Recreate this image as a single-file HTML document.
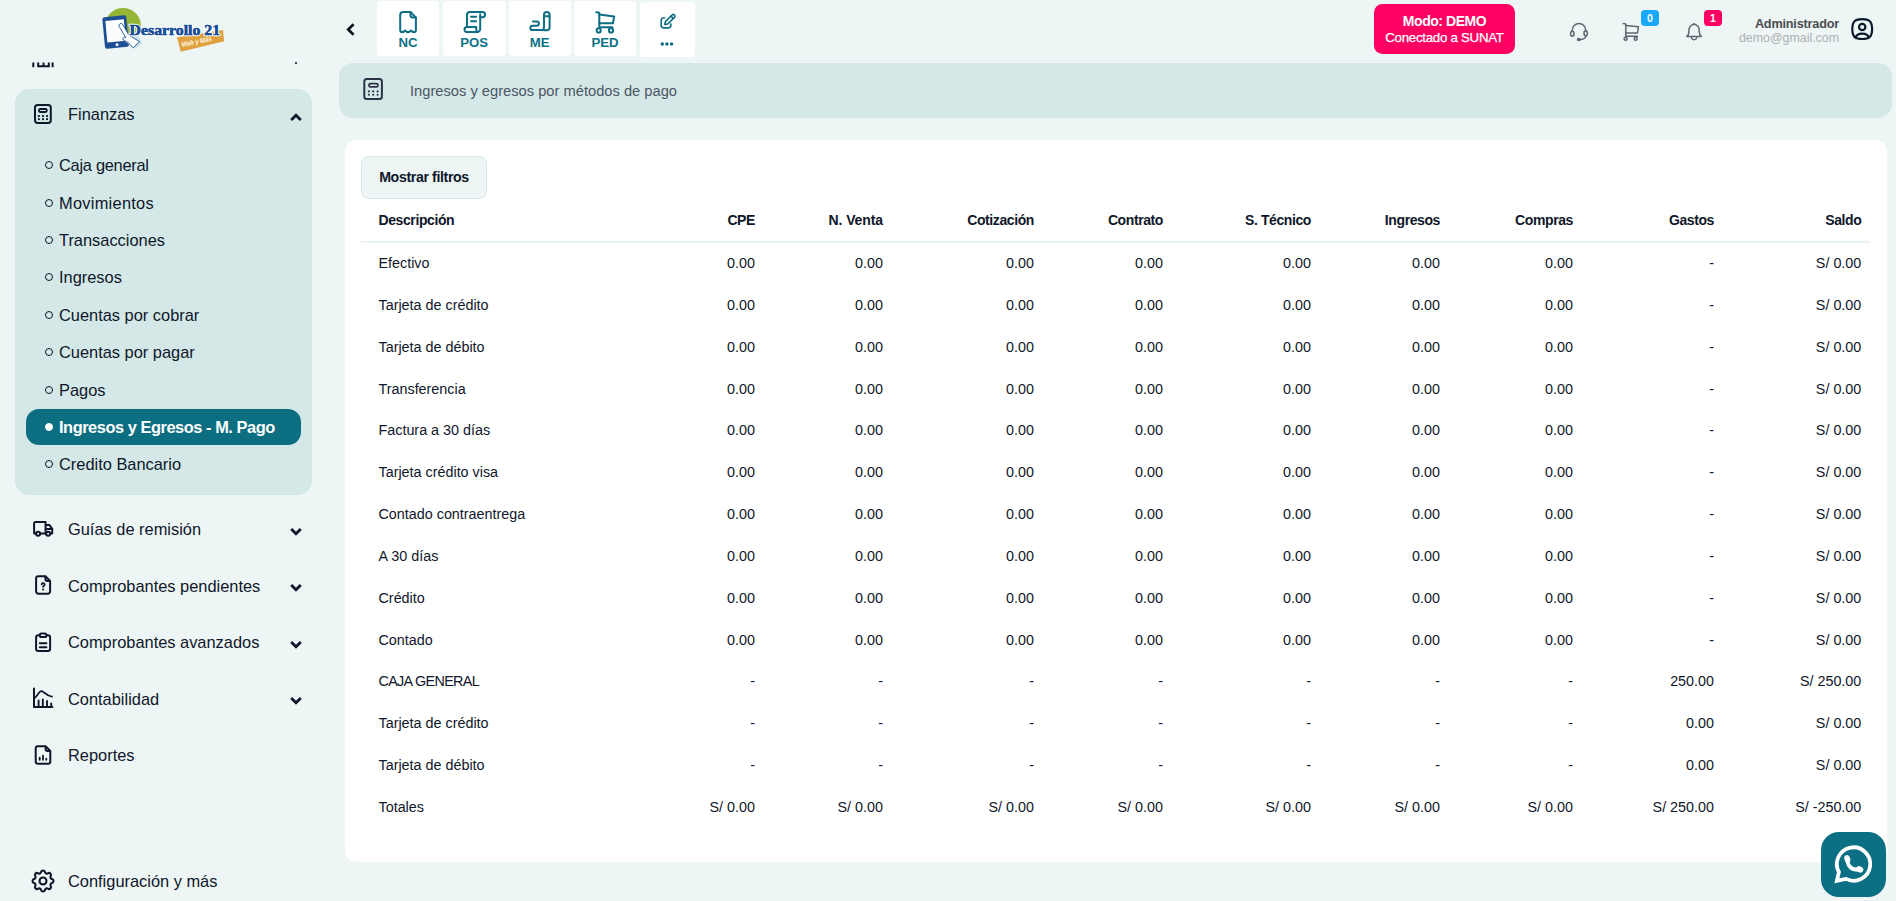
<!DOCTYPE html>
<html lang="es">
<head>
<meta charset="utf-8">
<title>Ingresos y egresos por métodos de pago</title>
<style>
*{box-sizing:border-box;margin:0;padding:0}
html,body{width:1896px;height:901px;overflow:hidden}
body{background:#edf5f5;font-family:"Liberation Sans",sans-serif;color:#0f172a;position:relative;font-size:14px}
.abs{position:absolute}
svg{display:block;overflow:visible}
/* sidebar */
#side{position:absolute;left:0;top:0;width:330px;height:901px}
#fin{position:absolute;left:15px;top:89px;width:297.3px;height:405.6px;background:#d5e8e8;border-radius:14.5px}
.nav{position:absolute;left:68px;font-size:16.4px;line-height:20px;white-space:nowrap;color:#0f172a}
.sub{position:absolute;left:59px;font-size:16.4px;line-height:20px;white-space:nowrap;color:#0f172a}
.dot{position:absolute;left:45px;width:8px;height:8px;border:1.5px solid #0f172a;border-radius:50%}
#act{position:absolute;left:26px;top:409px;width:275px;height:36px;background:#0c6e81;border-radius:13px}
.ico{position:absolute}
.chev{position:absolute;left:290px}
/* top bar */
.tb{position:absolute;top:1px;height:55px;background:#fff;border-radius:4px;color:#0e7288;font-weight:bold;font-size:13.2px;text-align:center}
.tb span{position:absolute;left:0;right:0;top:33.8px;line-height:16px}
#demo{position:absolute;left:1374px;top:4px;width:141px;height:50px;background:#fe0062;border-radius:8.5px;color:#fff;text-align:center;font-weight:bold}
/* title bar */
#title{position:absolute;left:339px;top:63px;width:1553px;height:54.5px;background:#d5e8e8;border-radius:14px}
#title .t{position:absolute;left:71px;top:18px;font-size:14.7px;line-height:20px;color:#4b5563;white-space:nowrap}
/* card */
#card{position:absolute;left:345px;top:140px;width:1542px;height:722px;background:#fff;border-radius:12px}
#btn{position:absolute;left:16px;top:16px;width:126px;height:43px;background:#edf5f5;border:1px solid #d5e8e8;border-radius:8px;font-weight:bold;font-size:14.2px;letter-spacing:-0.38px;line-height:41px;text-align:center;color:#0f172a}
table{position:absolute;left:16px;top:59px;width:1509px;border-collapse:separate;border-spacing:0;table-layout:fixed;font-size:14.35px;color:#0f172a}
th,td{text-align:right;padding:0 8.7px 0 0;white-space:nowrap;font-weight:normal;overflow:visible}
th{height:44.1px;font-weight:bold;font-size:14px;letter-spacing:-0.4px;border-bottom:2.2px solid #e9f3f3}
td{height:41.83px;padding-bottom:1.9px}
th:first-child,td:first-child{text-align:left;padding-left:17.5px}
/* whatsapp */
#wa{position:absolute;left:1821px;top:832px;width:65.3px;height:65.2px;background:#0c7085;border-radius:18px}
</style>
</head>
<body>
<div id="side">
  <div id="fin"></div>
  <div id="act"></div>
  <!-- logo -->
  <svg class="abs" style="left:95px;top:4px" width="135" height="52" viewBox="95 4 135 52">
    <path d="M105 25.9 a18 18 0 0 1 36 0 L140.2 33 H106 Z" fill="#94b634"/>
    <g transform="rotate(-5.5 115.7 31.8)"><rect x="103.6" y="16.2" width="24" height="31.6" rx="2.2" fill="#1c4f93"/><path d="M106.4 20 H125 V41.6 H106.4 Z" fill="#fbfcfd"/><circle cx="115.8" cy="44.7" r="1.5" fill="#fbfcfd"/></g>
    <path d="M128 35 L137 34.6 L142.4 43.4 L139 46 L133.5 49.2 L129.5 44.5 L124 41 Z" fill="#c9e3ee"/>
    <path d="M119.9 23.8 q1.6 -1 2.6 0.5 L129.2 35.4 L139.6 41.6 L133.2 47.8 L128.4 42.8 L123.6 40.2 Q121.6 38.4 124.2 37.2 L125.8 37.6 L119.1 26.4 q-0.7 -1.6 0.8 -2.6 Z" fill="#fdfeff" stroke="#1c4f93" stroke-width="0.9" stroke-linejoin="round"/>
    <path d="M177 37.2 L222.9 29.9 L224.2 41.2 L180.8 51.8 Z" fill="#dfa13f"/>
    <text transform="rotate(-11.5 182 47)" x="182" y="47" font-family="'Liberation Sans',sans-serif" font-weight="bold" font-style="italic" font-size="7" fill="#fff7e6" textLength="30.5" lengthAdjust="spacingAndGlyphs">Web y Más</text>
    <text x="129.6" y="35.3" font-family="'Liberation Serif',serif" font-weight="bold" font-size="14.6" fill="#1a4e96" stroke="#fcfeff" stroke-width="2.4" stroke-linejoin="round" paint-order="stroke" textLength="90.6" lengthAdjust="spacingAndGlyphs">Desarrollo 21</text>
    <text x="129.6" y="35.3" font-family="'Liberation Serif',serif" font-weight="bold" font-size="14.6" fill="#1a4e96" stroke="#1a4e96" stroke-width="0.45" stroke-linejoin="round" textLength="90.6" lengthAdjust="spacingAndGlyphs">Desarrollo 21</text>
  </svg>
  <!-- finanzas header -->
  <svg class="ico" style="left:34.2px;top:104px" width="18" height="20" viewBox="0 0 18 20" fill="none" stroke="#0f172a" stroke-width="2" stroke-linejoin="round" stroke-linecap="round"><rect x="1" y="1" width="15.8" height="17.9" rx="2.6"/><rect x="4.9" y="5" width="8" height="3" rx="1.5" stroke-width="1.8"/><g stroke="none" fill="#0f172a"><rect x="3.9" y="11.1" width="1.9" height="1.9"/><rect x="8" y="11.1" width="1.9" height="1.9"/><rect x="12.1" y="11.1" width="1.9" height="1.9"/><rect x="3.9" y="14.2" width="1.9" height="1.9"/><rect x="8" y="14.2" width="1.9" height="1.9"/><rect x="12.1" y="14.2" width="1.9" height="1.9"/></g></svg>
  <div class="nav" style="top:104px">Finanzas</div>
  <svg class="chev" style="top:113px" width="12" height="8" viewBox="0 0 12 8" fill="none" stroke="#0f172a" stroke-width="2.8"><path d="M1.2 7 L6 2.2 L10.8 7"/></svg>
  <!-- submenu -->
  <div class="dot" style="top:161px"></div><div class="sub" style="top:155px;letter-spacing:-0.27px">Caja general</div>
  <div class="dot" style="top:199px"></div><div class="sub" style="top:193px;letter-spacing:0.27px">Movimientos</div>
  <div class="dot" style="top:236px"></div><div class="sub" style="top:230px">Transacciones</div>
  <div class="dot" style="top:273px"></div><div class="sub" style="top:267px">Ingresos</div>
  <div class="dot" style="top:311px"></div><div class="sub" style="top:305px">Cuentas por cobrar</div>
  <div class="dot" style="top:348px"></div><div class="sub" style="top:342px">Cuentas por pagar</div>
  <div class="dot" style="top:386px"></div><div class="sub" style="top:380px">Pagos</div>
  <div class="dot" style="top:423px;background:#fff;border-color:#fff"></div><div class="sub" style="top:417px;color:#fff;font-weight:bold;letter-spacing:-0.46px">Ingresos y Egresos - M. Pago</div>
  <div class="dot" style="top:460px"></div><div class="sub" style="top:454px">Credito Bancario</div>
  <!-- truck -->
  <svg class="ico" style="left:31px;top:518px" width="24" height="22" viewBox="31 518 24 22" fill="none" stroke="#0f172a" stroke-width="2" stroke-linecap="round" stroke-linejoin="round"><path d="M35.9 533.6 H34.1 V523.2 a1.2 1.2 0 0 1 1.2 -1.2 H45.6 V533.6 H40.3"/><path d="M45.6 524.9 H49.3 L52.2 528.9 V533.6 H50.4 M45.8 533.6 H45.6"/><path d="M45.6 528.9 H52.2"/><circle cx="38.1" cy="533.8" r="2"/><circle cx="48.1" cy="533.8" r="2"/></svg>
  <!-- file question -->
  <svg class="ico" style="left:33px;top:573px" width="20" height="24" viewBox="33 573 20 24" fill="none" stroke="#0f172a" stroke-width="2" stroke-linecap="round" stroke-linejoin="round"><path d="M45.4 576.2 H38.3 a2.2 2.2 0 0 0 -2.2 2.2 V591.5 a2.2 2.2 0 0 0 2.2 2.2 H47.9 a2.2 2.2 0 0 0 2.2 -2.2 V580.9 Z"/><path d="M45.4 576.4 V579 a1.9 1.9 0 0 0 1.9 1.9 H49.9"/><path d="M41.6 584.4 q0 -1.3 1.5 -1.3 q1.6 0 1.6 1.3 q0 0.8 -0.8 1.3 q-0.8 0.5 -0.8 1.2" stroke-width="1.7"/><circle cx="43.1" cy="589.6" r="1" fill="#0f172a" stroke="none"/></svg>
  <!-- clipboard -->
  <svg class="ico" style="left:33px;top:630px" width="20" height="24" viewBox="33 630 20 24" fill="none" stroke="#0f172a" stroke-width="2" stroke-linecap="round" stroke-linejoin="round"><path d="M39.6 635.3 H38.3 a2.2 2.2 0 0 0 -2.2 2.2 V648.8 a2.2 2.2 0 0 0 2.2 2.2 H47.9 a2.2 2.2 0 0 0 2.2 -2.2 V637.5 a2.2 2.2 0 0 0 -2.2 -2.2 H46.6"/><rect x="39.8" y="633.4" width="6.6" height="3.6" rx="1.6"/><path d="M39.8 643.3 H46.4 M39.8 647.2 H46.4"/></svg>
  <!-- chart -->
  <svg class="ico" style="left:31px;top:686px" width="24" height="24" viewBox="31 686 24 24" fill="none" stroke="#0f172a" stroke-width="2" stroke-linecap="round" stroke-linejoin="round"><path d="M34 688.6 V707 H52.4"/><path d="M34 698.6 c3 -1.4 4.6 -7.4 7.4 -7.4 c2.6 0 4.6 4.6 10.6 5.4" stroke-width="1.7"/><path d="M38.6 707 V700.4 M42.8 707 V699.4 M47 707 V701 M51.2 707 V703.4" stroke-width="1.9"/></svg>
  <!-- report -->
  <svg class="ico" style="left:33px;top:743px" width="20" height="24" viewBox="33 743 20 24" fill="none" stroke="#0f172a" stroke-width="2" stroke-linecap="round" stroke-linejoin="round"><path d="M45.6 746.2 H37.9 a2.2 2.2 0 0 0 -2.2 2.2 V761.5 a2.2 2.2 0 0 0 2.2 2.2 H48.1 a2.2 2.2 0 0 0 2.2 -2.2 V750.9 Z"/><path d="M45.6 746.4 V749 a1.9 1.9 0 0 0 1.9 1.9 H50.1"/><path d="M39.7 759.8 V757.6 M43 759.8 V755.6 M46.3 759.8 V758.6" stroke-width="1.8"/></svg>
  <!-- gear -->
  <svg class="ico" style="left:29.2px;top:866.5px" width="28" height="28" viewBox="0 0 24 24" fill="none" stroke="#0f172a" stroke-width="1.8" stroke-linecap="round" stroke-linejoin="round"><path d="M10.325 4.317c.426 -1.756 2.924 -1.756 3.35 0a1.724 1.724 0 0 0 2.573 1.066c1.543 -.94 3.31 .826 2.37 2.37a1.724 1.724 0 0 0 1.065 2.572c1.756 .426 1.756 2.924 0 3.35a1.724 1.724 0 0 0 -1.066 2.573c.94 1.543 -.826 3.31 -2.37 2.37a1.724 1.724 0 0 0 -2.572 1.065c-.426 1.756 -2.924 1.756 -3.35 0a1.724 1.724 0 0 0 -2.573 -1.066c-1.543 .94 -3.31 -.826 -2.37 -2.37a1.724 1.724 0 0 0 -1.065 -2.572c-1.756 -.426 -1.756 -2.924 0 -3.35a1.724 1.724 0 0 0 1.066 -2.573c-.94 -1.543 .826 -3.31 2.37 -2.37c1 .608 2.296 .07 2.572 -1.065z"/><path d="M9 12a3 3 0 1 0 6 0a3 3 0 0 0 -6 0"/></svg>
  <!-- partially hidden item above -->
  <svg class="ico" style="left:31px;top:60px" width="24" height="8" viewBox="31 60 24 8" fill="none" stroke="#0f172a" stroke-width="2"><path d="M33.3 62.4 V67.3 M52.6 62.4 V67.3 M37.3 66.3 H49.8 M38.2 62.4 V66.3 M43.5 62.4 V66.3 M48.8 62.4 V66.3"/></svg>
  <div class="abs" style="left:294.6px;top:62px;width:2px;height:2px;background:#0f172a;border-radius:1px"></div>
  <!-- other nav -->
  <div class="nav" style="top:519px">Guías de remisión</div>
  <div class="nav" style="top:576px">Comprobantes pendientes</div>
  <div class="nav" style="top:632px">Comprobantes avanzados</div>
  <div class="nav" style="top:689px">Contabilidad</div>
  <div class="nav" style="top:745px">Reportes</div>
  <div class="nav" style="top:871px">Configuración y más</div>
  <svg class="chev" style="top:528px" width="12" height="8" viewBox="0 0 12 8" fill="none" stroke="#0f172a" stroke-width="2.8"><path d="M1.2 1 L6 5.8 L10.8 1"/></svg>
  <svg class="chev" style="top:584px" width="12" height="8" viewBox="0 0 12 8" fill="none" stroke="#0f172a" stroke-width="2.8"><path d="M1.2 1 L6 5.8 L10.8 1"/></svg>
  <svg class="chev" style="top:641px" width="12" height="8" viewBox="0 0 12 8" fill="none" stroke="#0f172a" stroke-width="2.8"><path d="M1.2 1 L6 5.8 L10.8 1"/></svg>
  <svg class="chev" style="top:697px" width="12" height="8" viewBox="0 0 12 8" fill="none" stroke="#0f172a" stroke-width="2.8"><path d="M1.2 1 L6 5.8 L10.8 1"/></svg>
</div>
<!-- top bar -->
<svg class="abs" style="left:346px;top:23px" width="9" height="13" viewBox="0 0 9 13" fill="none" stroke="#0b0f19" stroke-width="2.6"><path d="M7.6 1.2 L2.2 6.5 L7.6 11.8"/></svg>
<div class="tb" style="left:377px;width:62px"><span>NC</span></div>
<div class="tb" style="left:443px;width:62.5px"><span>POS</span></div>
<div class="tb" style="left:509px;width:61.5px"><span>ME</span></div>
<div class="tb" style="left:574px;width:62px"><span>PED</span></div>
<div class="tb" style="left:640px;width:55px;top:2px"></div>
<!-- NC icon -->
<svg class="abs" style="left:397px;top:9px" width="24" height="26" viewBox="397 9 24 26" fill="none" stroke="#0e6e84" stroke-width="2" stroke-linejoin="round" stroke-linecap="round"><path d="M410.5 12 H403.2 a3 3 0 0 0 -3 3 V30.2 q0.2 2.1 2 2 q1.6 -0.2 2.9 -1.7 q3 3.4 5.9 0 q1.3 1.5 2.9 1.7 q1.8 0.1 2 -2 V17.6 Z"/><path d="M410.5 12.3 V15.6 a2 2 0 0 0 2 2 H416"/></svg>
<!-- POS icon -->
<svg class="abs" style="left:461px;top:9px" width="28" height="26" viewBox="461 9 28 26" fill="none" stroke="#0e6e84" stroke-width="2" stroke-linejoin="round" stroke-linecap="round"><path d="M467 27 V15 a3 3 0 0 1 3 -3 H482.5 a2.6 2.6 0 1 1 0 5.2 H480.2"/><path d="M480.2 14.2 V29 a3 3 0 0 1 -3 3 H467 a2.5 2.5 0 0 1 0 -5 H476.2 V29.5 a2.4 2.4 0 0 0 1.2 2.2"/><path d="M471 16.8 H476.2 M471 21.3 H476.2"/></svg>
<!-- ME icon -->
<svg class="abs" style="left:527px;top:9px" width="26" height="26" viewBox="527 9 26 26" fill="none" stroke="#0e6e84" stroke-width="2" stroke-linejoin="round" stroke-linecap="round"><path d="M533 21.5 H536.8 a2.1 2.1 0 0 1 0 4.2 H532.6 a2.2 2.2 0 0 0 0 4.4 H545"/><path d="M544 27 V14.8 a2.8 2.8 0 0 1 5.6 0 V27.4 a2.8 2.8 0 0 1 -2.8 2.8 H544.4"/><path d="M544 16.3 H549.4"/><path d="M544 27 q0 2.2 -1.6 3.2"/></svg>
<!-- PED icon -->
<svg class="abs" style="left:593px;top:9px" width="26" height="26" viewBox="593 9 26 26" fill="none" stroke="#0e6e84" stroke-width="2" stroke-linejoin="round" stroke-linecap="round"><path d="M596.2 12.2 L599.3 12.7 V27.2 H612.4"/><path d="M599.3 14.6 L614.2 16.6 L612.9 23.2 H599.3"/><circle cx="598.7" cy="30.4" r="2.1"/><circle cx="611" cy="30.4" r="2.1"/></svg>
<!-- edit icon -->
<svg class="abs" style="left:657px;top:11px" width="22" height="36" viewBox="657 11 22 36" fill="none" stroke="#0e6e84" stroke-width="1.65" stroke-linejoin="round" stroke-linecap="round"><path d="M664.6 18 H663.4 a2.2 2.2 0 0 0 -2.2 2.2 V25.6 a2.2 2.2 0 0 0 2.2 2.2 H668.6 a2.2 2.2 0 0 0 2.2 -2.2 V24"/><path d="M665.4 21.7 L672.1 15 a1.55 1.55 0 0 1 2.3 2.3 L667.7 24 L664.9 24.5 Z"/><path d="M671 16.2 L673.2 18.4"/><g stroke="none" fill="#0e6e84"><circle cx="662.3" cy="43.9" r="1.75"/><circle cx="666.9" cy="43.9" r="1.75"/><circle cx="671.5" cy="43.9" r="1.75"/></g></svg>
<div id="demo"><div class="abs" style="left:0;right:0;top:9.2px;font-size:14px;letter-spacing:-0.45px;line-height:16px">Modo: DEMO</div><div class="abs" style="left:0;right:0;top:25.8px;font-size:13.3px;letter-spacing:-0.28px;-webkit-text-stroke:0.25px #fff;line-height:16px;font-weight:normal">Conectado a SUNAT</div></div>
<div class="abs" style="left:1641px;top:10px;width:18px;height:16px;background:#1aa8fc;border-radius:4px;color:#fff;font-size:10.5px;font-weight:bold;line-height:16px;text-align:center">0</div>
<div class="abs" style="left:1704px;top:10px;width:18px;height:16px;background:#fe0062;border-radius:4px;color:#fff;font-size:10.5px;font-weight:bold;line-height:16px;text-align:center">1</div>
<div class="abs" style="right:57px;top:15.5px;font-size:12.7px;letter-spacing:-0.2px;line-height:16px;font-weight:bold;color:#4a4c50;white-space:nowrap">Administrador</div>
<div class="abs" style="right:57px;top:30px;font-size:12.4px;line-height:16px;color:#adb0b3;white-space:nowrap">demo@gmail.com</div>
<!-- headset -->
<svg class="abs" style="left:1567px;top:20px" width="24" height="24" viewBox="1567 20 24 24" fill="none" stroke="#5d6671" stroke-width="1.5" stroke-linecap="round" stroke-linejoin="round"><path d="M1572.2 31.2 V30.4 a6.8 6.8 0 0 1 13.6 0 V31"/><ellipse cx="1572.3" cy="33.7" rx="1.7" ry="2.5"/><ellipse cx="1585.7" cy="33.3" rx="1.7" ry="2.5"/><path d="M1586.2 35.8 q-0.8 3.4 -6.4 3.7"/><ellipse cx="1578.8" cy="39.5" rx="1.3" ry="1" fill="#5d6671"/></svg>
<!-- cart gray -->
<svg class="abs" style="left:1620px;top:20px" width="24" height="24" viewBox="1620 20 24 24" fill="none" stroke="#5d6671" stroke-width="1.5" stroke-linecap="round" stroke-linejoin="round"><path d="M1623.2 23.6 L1625.8 24 V36.2 H1637.4"/><path d="M1625.8 25.6 L1638.4 26.8 L1637.5 33 H1625.8"/><circle cx="1625.6" cy="38.8" r="1.5"/><circle cx="1635.7" cy="38.8" r="1.5"/></svg>
<!-- bell -->
<svg class="abs" style="left:1682px;top:20px" width="24" height="24" viewBox="1682 20 24 24" fill="none" stroke="#5d6671" stroke-width="1.5" stroke-linecap="round" stroke-linejoin="round"><path d="M1686.8 36.6 H1701.4 q-2.2 -2 -2.2 -5.4 V29.6 a5.1 5.1 0 0 0 -10.2 0 V31.2 q0 3.4 -2.2 5.4 Z"/><path d="M1691.4 37.6 a2.8 2.8 0 0 0 5.4 0"/><path d="M1693.4 24.2 a0.8 0.8 0 0 1 1.4 0"/></svg>
<!-- user -->
<svg class="abs" style="left:1850px;top:17px" width="25" height="25" viewBox="1850 17 25 25" fill="none" stroke="#0b1a2b" stroke-width="2.2" stroke-linecap="round" stroke-linejoin="round"><path d="M1862.2 19.2 c6.6 0 9.9 1.6 9.9 9.9 c0 8.3 -3.3 9.9 -9.9 9.9 c-6.6 0 -9.9 -1.6 -9.9 -9.9 c0 -8.3 3.3 -9.9 9.9 -9.9 Z"/><circle cx="1862.2" cy="27" r="3.2"/><path d="M1856 37.2 c0.4 -2.6 2.6 -3.6 6.2 -3.6 c3.6 0 5.8 1 6.2 3.6"/></svg>
<div id="title"><svg class="abs" style="left:22px;top:13px" width="24" height="26" viewBox="361 76 24 26" fill="none" stroke="#2c3248" stroke-width="2" stroke-linejoin="round" stroke-linecap="round"><rect x="364.3" y="79.1" width="17.6" height="19.9" rx="2.5"/><rect x="369" y="83.6" width="8.9" height="3.3" rx="1.5" stroke-width="1.8"/><g stroke="none" fill="#2c3248"><circle cx="368.9" cy="91.4" r="1.05"/><circle cx="373.2" cy="91.4" r="1.05"/><circle cx="377.6" cy="91.4" r="1.05"/><circle cx="368.9" cy="94.7" r="1.05"/><circle cx="373.2" cy="94.7" r="1.05"/><circle cx="377.6" cy="94.7" r="1.05"/></g></svg><div class="t">Ingresos y egresos por métodos de pago</div></div>
<div id="card">
  <div id="btn">Mostrar filtros</div>
  <table>
    <colgroup><col style="width:299px"><col style="width:103.7px"><col style="width:128px"><col style="width:151px"><col style="width:129px"><col style="width:148px"><col style="width:129px"><col style="width:133px"><col style="width:141px"><col style="width:147.3px"></colgroup>
    <thead><tr><th>Descripción</th><th>CPE</th><th style="letter-spacing:-0.1px">N. Venta</th><th>Cotización</th><th>Contrato</th><th>S. Técnico</th><th>Ingresos</th><th>Compras</th><th>Gastos</th><th>Saldo</th></tr></thead>
    <tbody>
    <tr><td>Efectivo</td><td>0.00</td><td>0.00</td><td>0.00</td><td>0.00</td><td>0.00</td><td>0.00</td><td>0.00</td><td>-</td><td>S/ 0.00</td></tr>
    <tr><td>Tarjeta de crédito</td><td>0.00</td><td>0.00</td><td>0.00</td><td>0.00</td><td>0.00</td><td>0.00</td><td>0.00</td><td>-</td><td>S/ 0.00</td></tr>
    <tr><td>Tarjeta de débito</td><td>0.00</td><td>0.00</td><td>0.00</td><td>0.00</td><td>0.00</td><td>0.00</td><td>0.00</td><td>-</td><td>S/ 0.00</td></tr>
    <tr><td>Transferencia</td><td>0.00</td><td>0.00</td><td>0.00</td><td>0.00</td><td>0.00</td><td>0.00</td><td>0.00</td><td>-</td><td>S/ 0.00</td></tr>
    <tr><td>Factura a 30 días</td><td>0.00</td><td>0.00</td><td>0.00</td><td>0.00</td><td>0.00</td><td>0.00</td><td>0.00</td><td>-</td><td>S/ 0.00</td></tr>
    <tr><td>Tarjeta crédito visa</td><td>0.00</td><td>0.00</td><td>0.00</td><td>0.00</td><td>0.00</td><td>0.00</td><td>0.00</td><td>-</td><td>S/ 0.00</td></tr>
    <tr><td>Contado contraentrega</td><td>0.00</td><td>0.00</td><td>0.00</td><td>0.00</td><td>0.00</td><td>0.00</td><td>0.00</td><td>-</td><td>S/ 0.00</td></tr>
    <tr><td>A 30 días</td><td>0.00</td><td>0.00</td><td>0.00</td><td>0.00</td><td>0.00</td><td>0.00</td><td>0.00</td><td>-</td><td>S/ 0.00</td></tr>
    <tr><td>Crédito</td><td>0.00</td><td>0.00</td><td>0.00</td><td>0.00</td><td>0.00</td><td>0.00</td><td>0.00</td><td>-</td><td>S/ 0.00</td></tr>
    <tr><td>Contado</td><td>0.00</td><td>0.00</td><td>0.00</td><td>0.00</td><td>0.00</td><td>0.00</td><td>0.00</td><td>-</td><td>S/ 0.00</td></tr>
    <tr><td style="letter-spacing:-0.66px">CAJA GENERAL</td><td>-</td><td>-</td><td>-</td><td>-</td><td>-</td><td>-</td><td>-</td><td>250.00</td><td>S/ 250.00</td></tr>
    <tr><td>Tarjeta de crédito</td><td>-</td><td>-</td><td>-</td><td>-</td><td>-</td><td>-</td><td>-</td><td>0.00</td><td>S/ 0.00</td></tr>
    <tr><td>Tarjeta de débito</td><td>-</td><td>-</td><td>-</td><td>-</td><td>-</td><td>-</td><td>-</td><td>0.00</td><td>S/ 0.00</td></tr>
    <tr><td>Totales</td><td>S/ 0.00</td><td>S/ 0.00</td><td>S/ 0.00</td><td>S/ 0.00</td><td>S/ 0.00</td><td>S/ 0.00</td><td>S/ 0.00</td><td>S/ 250.00</td><td>S/ -250.00</td></tr>
    </tbody>
  </table>
</div>
<div id="wa"><svg class="abs" style="left:9px;top:8px" width="48" height="48" viewBox="1830 840 48 48" fill="none" stroke="#fff" stroke-width="3.8" stroke-linejoin="miter" stroke-miterlimit="6"><path d="M1836.9 880.7 L1838.9 872 A16.7 16.7 0 1 1 1846 878.9 Z"/><path d="M1847.3 859 Q1847.8 870.6 1859.4 869.7" stroke-width="3.9" stroke-linecap="round"/><g stroke="none" fill="#fff"><ellipse cx="1847.3" cy="858.9" rx="2.9" ry="3.8" transform="rotate(-18 1847.3 858.9)"/><ellipse cx="1859.7" cy="869.3" rx="3.7" ry="3" transform="rotate(28 1859.7 869.3)"/></g></svg></div>
</body>
</html>
